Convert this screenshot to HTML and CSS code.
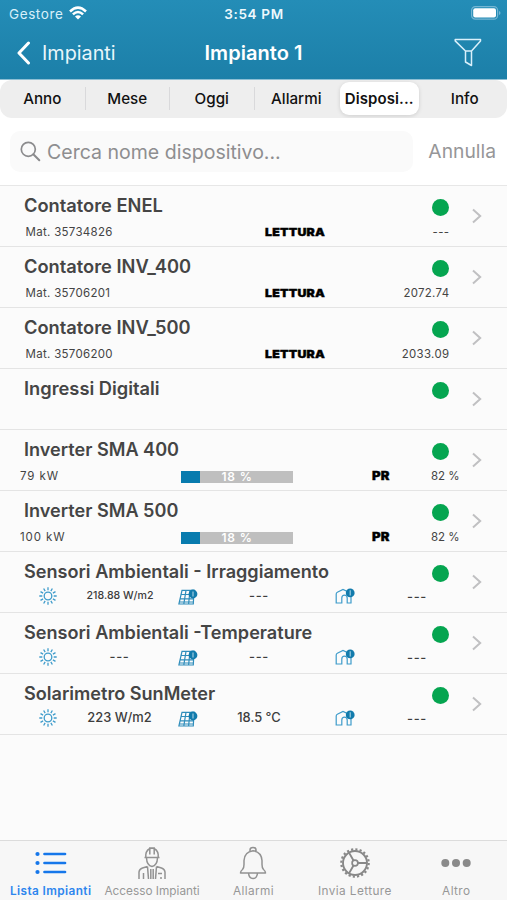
FILE: index.html
```html
<!DOCTYPE html>
<html lang="it">
<head>
<meta charset="utf-8">
<title>Impianto 1</title>
<link rel="stylesheet" href="styles.css">
</head>
<body>
<svg class="defs" aria-hidden="true">
  <symbol id="chev" viewBox="0 0 10 16"><path d="M1 1.5 8.2 8 1 14.5" fill="none" stroke="#c0c0c2" stroke-width="2"/></symbol>
  <symbol id="sun" viewBox="0 0 18 18"><g fill="none" stroke="#3f9ccb" stroke-width="1.3"><circle cx="9" cy="9" r="3.8"/><path d="M9 .3v3M9 14.7v3M.3 9h3M14.7 9h3M4.65 1.5l1.5 2.6M11.85 13.9l1.5 2.6M1.5 4.65l2.6 1.5M13.9 11.85l2.6 1.5M13.35 1.5l-1.5 2.6M6.15 13.9l-1.5 2.6M16.5 4.65l-2.6 1.5M4.1 11.85l-2.6 1.5"/></g></symbol>
  <symbol id="panel" viewBox="0 0 20 16"><path d="M4 1.300h12L15.300 15H.9zM8 1.300 5.800 15M12 1.300 10.600 15M3.200 5.500h12.500M2.200 9.800h13M1 13h14" fill="none" stroke="#2f8dbb" stroke-width="1.200"/><circle cx="15" cy="5" r="4.400" fill="#127bac"/><path d="M15 2.400v5.200" stroke="#a9d3e6" stroke-width="1.100"/></symbol>
  <symbol id="house" viewBox="0 0 20 16"><path d="M1.200 15V6Q1.200 4.800 2.300 4.300L8 1.400l8 3.800V15h-3.800V10Q12.200 7.200 9.500 7.200T6.800 10V15z" fill="none" stroke="#3d9bca" stroke-width="1.200"/><circle cx="15.200" cy="4.900" r="4.400" fill="#127bac"/><path d="M15.200 2.300v5.200" stroke="#a9d3e6" stroke-width="1.100"/></symbol>
</svg>
<div class="app">
  <header class="top">
    <div class="status">
      <span class="carrier">Gestore</span>
      <svg class="wifi" viewBox="0 0 18 14"><g fill="none" stroke="#fff" stroke-width="2.5"><path d="M1 5.500Q9-2.300 17 5.500"/><path d="M3.900 8.400q5.100-4.800 10.200 0"/></g><path d="M6 10.600q3-2.500 6 0L9 13.600z" fill="#fff"/></svg>
      <span class="time">3:54 PM</span>
      <svg class="battery" viewBox="0 0 30 14"><rect x=".6" y=".6" width="26" height="12.500" rx="3.700" fill="none" stroke="#75b6d3" stroke-width="1.200"/><rect x="2.200" y="2.200" width="22.800" height="9.300" rx="2" fill="#fff"/><path d="M28 5v4q1.500-.7 1.500-2T28 5" fill="#75b6d3"/></svg>
    </div>
    <nav class="nav">
      <a class="back"><svg class="back-icon" viewBox="0 0 15 24"><path d="M12.500 2 3 12l9.500 10" fill="none" stroke="#fff" stroke-width="3" stroke-linecap="round" stroke-linejoin="round"/></svg><span>Impianti</span></a>
      <h1>Impianto 1</h1>
      <svg class="filter" viewBox="0 0 28 29"><path d="M1.200 1.500h25.300v1.400L17.500 13v14.500L11.500 24V13L1.200 2.900zM11.500 13h6" fill="none" stroke="#d9f0fb" stroke-width="1.500" stroke-linejoin="round"/></svg>
    </nav>
  </header>
  <div class="segments">
    <span>Anno</span><span class="div">Mese</span><span class="div">Oggi</span><span class="div">Allarmi</span><span class="active">Disposi...</span><span>Info</span>
  </div>
  <div class="search">
    <div class="field"><svg viewBox="0 0 21 21"><circle cx="8.300" cy="8.300" r="7" fill="none" stroke="#8b8b8d" stroke-width="1.700"/><path d="m13.300 13.300 6 6" stroke="#8b8b8d" stroke-width="2" stroke-linecap="round"/></svg><span>Cerca nome dispositivo...</span></div>
    <span class="cancel">Annulla</span>
  </div>
  <main class="list">
    <article class="row"><div class="head"><h2>Contatore ENEL</h2><i class="dot"></i></div><div class="meter"><span>Mat. 35734826</span><b>LETTURA</b><span class="num">---</span></div><svg class="chev"><use href="#chev"/></svg></article>
    <article class="row"><div class="head"><h2>Contatore INV_400</h2><i class="dot"></i></div><div class="meter"><span>Mat. 35706201</span><b>LETTURA</b><span class="num">2072.74</span></div><svg class="chev"><use href="#chev"/></svg></article>
    <article class="row"><div class="head"><h2>Contatore INV_500</h2><i class="dot"></i></div><div class="meter"><span>Mat. 35706200</span><b>LETTURA</b><span class="num">2033.09</span></div><svg class="chev"><use href="#chev"/></svg></article>
    <article class="row"><div class="head"><h2>Ingressi Digitali</h2><i class="dot"></i></div><div class="meter"></div><svg class="chev"><use href="#chev"/></svg></article>
    <article class="row"><div class="head"><h2 class="tight">Inverter SMA 400</h2><i class="dot"></i></div><div class="inverter"><span class="kw">79 kW</span><div class="bar">18 %</div><b>PR</b><span>82 %</span></div><svg class="chev"><use href="#chev"/></svg></article>
    <article class="row"><div class="head"><h2 class="tight">Inverter SMA 500</h2><i class="dot"></i></div><div class="inverter"><span class="kw">100 kW</span><div class="bar">18 %</div><b>PR</b><span>82 %</span></div><svg class="chev"><use href="#chev"/></svg></article>
    <article class="row"><div class="head"><h2 class="tight">Sensori Ambientali - Irraggiamento</h2><i class="dot"></i></div><div class="sensor"><svg class="sun"><use href="#sun"/></svg><span class="small">218.88 W/m2</span><svg class="pic"><use href="#panel"/></svg><span class="dash">---</span><svg class="pic home"><use href="#house"/></svg><span class="dash low">---</span></div><svg class="chev"><use href="#chev"/></svg></article>
    <article class="row"><div class="head"><h2 class="tight">Sensori Ambientali -Temperature</h2><i class="dot"></i></div><div class="sensor"><svg class="sun"><use href="#sun"/></svg><span class="dash">---</span><svg class="pic"><use href="#panel"/></svg><span class="dash">---</span><svg class="pic home"><use href="#house"/></svg><span class="dash low">---</span></div><svg class="chev"><use href="#chev"/></svg></article>
    <article class="row"><div class="head"><h2 class="tight">Solarimetro SunMeter</h2><i class="dot"></i></div><div class="sensor"><svg class="sun"><use href="#sun"/></svg><span>223 W/m2</span><svg class="pic"><use href="#panel"/></svg><span>18.5 °C</span><svg class="pic home"><use href="#house"/></svg><span class="dash low">---</span></div><svg class="chev"><use href="#chev"/></svg></article>
  </main>
  <footer class="tabs">
    <a class="on"><svg viewBox="0 0 34 34"><g stroke="#1677ea" stroke-width="2.700" stroke-linecap="round"><path d="M10.500 8h20.500M10.500 17h20.500M10.500 26h20.500"/></g><g fill="#1677ea"><circle cx="3.500" cy="8" r="2.100"/><circle cx="3.500" cy="17" r="2.100"/><circle cx="3.500" cy="26" r="2.100"/></g></svg><span>Lista Impianti</span></a>
    <a><svg viewBox="0 0 34 34"><g fill="none" stroke="#929292" stroke-width="1.500"><path d="M9.500 11.500h15M10.800 11.500V8.500Q11.500 3 17 2q5.500 1 6.200 6.500v3M14.800 8.500V2h4.400v6.500M11.500 12q.3 7.500 5.500 8.500 5.200-1 5.500-8.500M4 33V26q.4-3 3.500-4l5-1.500M30 33V26q-.4-3-3.500-4l-5-1.500M8.500 33v-6M26 33v-2M12.500 20.500 13.500 33M21.500 20.500 20.500 33M15.800 23V33M18.200 23V33M23 27.500h4"/></g></svg><span>Accesso Impianti</span></a>
    <a><svg viewBox="0 0 34 34"><g fill="none" stroke="#929292" stroke-width="1.500" stroke-linejoin="round"><path d="M4.500 27q0-2 2-3.500 1.500-1.500 1.500-5v-4Q8.500 6 17 4.800 25.500 6 26 14.500v4q0 3.500 1.500 5 2 1.500 2 3.500zM14 5.500V4Q14 1.500 17 1.500T20 4v1.500M12.500 27q.5 5.500 4.500 5.500t4.500-5.500"/></g></svg><span>Allarmi</span></a>
    <a><svg viewBox="0 0 34 34"><g fill="none" stroke="#888"><circle cx="17" cy="17" r="13.700" stroke-width="2.200" stroke-dasharray="2.150 2.150"/><circle cx="17" cy="17" r="12" stroke-width="1.900"/><circle cx="17" cy="17" r="2.900" stroke-width="1.700"/><path d="M20 17h9M15.500 14.500 11 6.600M15.500 19.500 11 27.400" stroke-width="1.900"/></g></svg><span>Invia Letture</span></a>
    <a><svg viewBox="0 0 34 34"><g fill="#8a8a8a"><circle cx="6.300" cy="17" r="4"/><circle cx="17" cy="17" r="4"/><circle cx="27.700" cy="17" r="4"/></g></svg><span>Altro</span></a>
  </footer>
</div>
</body>
</html>
```
FILE: styles.css
```css
* { box-sizing: border-box; }
body { margin: 0; background: #fafafa; font-family: Inter, "Liberation Sans", sans-serif; }
.defs { display: none; }
.app { width: 507px; height: 900px; display: flex; flex-direction: column; overflow: hidden; }
h1, h2 { margin: 0; font-weight: 600; }
span, h1, h2 { white-space: nowrap; }

.top { height: 79.5px; flex: none; background: linear-gradient(#248db7, #1c7fa8); color: #fff; }
.status { height: 27px; display: grid; grid-template-columns: 60px 18px 1fr 30px; align-items: center; padding: 0 6px 0 9px; font-size: 13.500px; }
.carrier { color: #d8f0fa; letter-spacing: .6px; }
.wifi { width: 18px; height: 14px; margin-top: -1px; }
.time { justify-self: center; margin-left: -50px; font-weight: 600; letter-spacing: .65px; font-size: 13.500px; color: #eef9fd; }
.battery { width: 30px; height: 14px; margin-top: -1px; }
.nav { height: 52px; display: grid; grid-template-columns: 1fr auto 1fr; align-items: center; padding: 0 25px 0 16px; }
.back { display: flex; align-items: center; gap: 11px; font-size: 19.800px; color: #e9f6fb; }
.back-icon { width: 15px; height: 24px; }
.nav h1 { font-size: 20px; letter-spacing: .05px; margin-left: 9px; }
.filter { width: 28px; height: 29px; justify-self: end; margin-top: -2px; }

.segments { height: 38.500px; flex: none; display: grid; grid-template-columns: repeat(6, 1fr); align-items: center; background: #eee; border-radius: 12px; font-size: 15.200px; font-weight: 500; text-align: center; color: #111; box-shadow: 0 0 0 8px #fff; clip-path: inset(0); }
.segments span { line-height: 23px; }
.segments .div { border-left: 1px solid #d9d9db; }
.segments .active { line-height: 33px; margin: 0 4px 0 2px; background: #fff; border-radius: 9px; font-weight: 600; font-size: 15px; letter-spacing: .1px; box-shadow: 0 1px 4px #0002; }

.search { height: 67.500px; flex: none; display: flex; align-items: center; justify-content: space-between; padding: 0 11px 0 10px; background: #fff; border-bottom: 1px solid #e7e7e7; color: #8e8e90; font-size: 19.550px; }
.field { width: 403px; height: 41px; border-radius: 10px; background: #fafafa; display: flex; align-items: center; gap: 6px; padding: 1px 0 0 10px; }
.field svg { width: 21px; height: 21px; }
.cancel { margin-top: -1px; color: #969698; font-size: 19.300px; }

.list { flex: 1; background: #fbfbfb; }
.row { height: 61.100px; display: grid; grid-template: 40px 20px / 460px 1fr; border-bottom: 1px solid #e4e4e4; }
.head { display: flex; justify-content: space-between; align-items: flex-start; padding: 7px 11px 0 24px; }
h2 { font-size: 18.300px; line-height: 24px; color: #454545; }
h2.tight { font-size: 18.100px; }
.dot { width: 17px; height: 17px; border-radius: 50%; background: #05a550; margin-top: 6px; }
.chev { grid-column: 2; grid-row: 1 / 3; align-self: center; width: 10px; height: 16px; margin: 0 0 0 12px; }
.meter, .inverter { display: grid; align-items: center; line-height: 12px; font-size: 11.500px; color: #444; align-self: start; }
.meter { grid-template-columns: 239px 1fr auto; padding: 0 11px 0 25.500px; font-size: 11.400px; letter-spacing: .3px; }
.inverter { grid-template-columns: 161px 112px 1fr 28px; padding: 0 1px 0 20px; }
.meter span:first-child { font-size: 11.500px; }
.meter .num { letter-spacing: .35px; margin-right: -.4px; }
.kw { letter-spacing: .9px; }
b { justify-self: start; font-weight: 900; color: #000; font-size: 10.900px; letter-spacing: .2px; -webkit-text-stroke: .35px #000; transform: scaleX(1.135); transform-origin: left; }
.inverter b { justify-self: start; margin-left: 79px; font-size: 11.500px; }
.bar { height: 12px; margin-top: 1px; line-height: 12px; text-align: center; color: #fff; font-weight: 600; background: linear-gradient(90deg, #087bae 19.500px, #bfbfbf 19.500px); letter-spacing: .8px; font-size: 12px; }
.sensor { display: grid; grid-template-columns: 18px 121px 20px 137px 20px 124px; align-items: center; padding-left: 39px; height: 18px; margin-top: -6px; font-size: 12.900px; font-weight: 500; color: #3d3d3d; }
.sensor span { text-align: center; padding-left: 4px; }
.sensor .pic + span { padding: 0 15px 0 0; }
.sensor .pic + .low { padding: 2px 0 0; }
.sun { width: 18px; height: 18px; }
.pic { width: 20px; height: 16px; margin-top: 3px; }
.home { margin-top: 0; }
.sensor .small { font-size: 10.600px; padding-left: 5px; }
.dash { letter-spacing: .7px; }

.tabs { height: 60.500px; flex: none; display: grid; grid-template-columns: repeat(5, 1fr); border-top: 1px solid #dcdcdc; background: #f7f7f7; color: #979797; font-size: 11.800px; }
.tabs a { display: flex; flex-direction: column; align-items: center; padding: 5px 0 0; }
.tabs svg { width: 34px; height: 34px; }
.tabs span { line-height: 14px; margin-top: 4px; letter-spacing: .4px; }
.tabs a:nth-child(2) span { letter-spacing: 0; }
.tabs .on { color: #2d86ee; font-weight: 600; }
```
